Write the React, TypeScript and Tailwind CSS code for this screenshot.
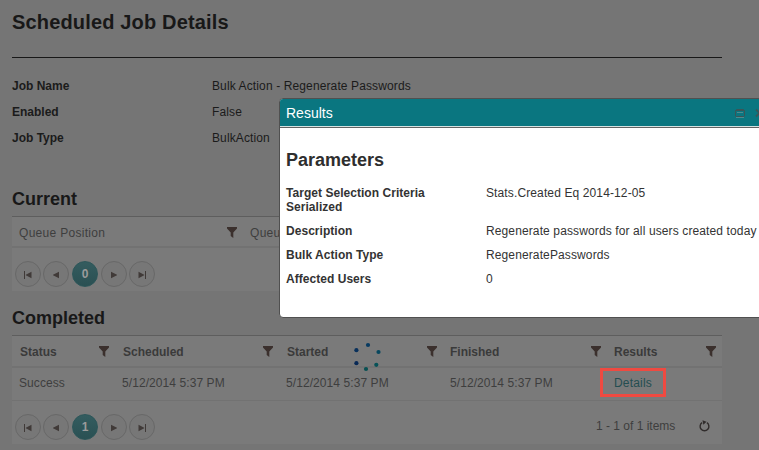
import React from "react";

function Filter() {
  return (
    <svg width="10" height="12" viewBox="0 0 10 12" className="shrink-0" fill="#3b302d">
      <path d="M0 0H10V1.5L6.3 5.5V11L3.7 9V5.5L0 1.5Z" />
    </svg>
  );
}

type ArrowKind = "first" | "prev" | "next" | "last";

function Arrow({ kind }: { kind: ArrowKind }) {
  const flip = kind === "next" || kind === "last";
  const bar = kind === "first" || kind === "last";
  return (
    <svg width="8" height="8" viewBox="0 0 8 8" fill="#403a38" className={flip ? "-scale-x-100" : ""}>
      {bar && <path d="M0 0H1V8H0Z" />}
      <path d={bar ? "M7.5 0.8V7.2L1.8 4.3V3.7Z" : "M7 0.8V7.2L1 4.3V3.7Z"} />
    </svg>
  );
}

function Round({ kind }: { kind: ArrowKind }) {
  return (
    <span className="flex h-[26px] w-[26px] items-center justify-center rounded-full border border-[#686868] bg-[#777777] pt-0.5">
      <Arrow kind={kind} />
    </span>
  );
}

function Pager({ page }: { page: string }) {
  return (
    <div className="flex items-center">
      <Round kind="first" />
      <span className="w-0.5" />
      <Round kind="prev" />
      <span className="mr-[3px] ml-[3px] flex h-[26px] w-[26px] items-center justify-center rounded-full border border-[#2c5659] bg-linear-to-b from-[#345c5f] to-[#2a5053] text-[12px] font-bold text-[#9b9b9b]">
        {page}
      </span>
      <Round kind="next" />
      <span className="w-0.5" />
      <Round kind="last" />
    </div>
  );
}

function JobRow({ label, value }: { label: string; value: string }) {
  return (
    <div className="flex h-[26px] items-center whitespace-nowrap">
      <span className="w-[200px] font-bold tracking-normal">{label}</span>
      <span>{value}</span>
    </div>
  );
}

function HeadCell({ label, className }: { label: string; className: string }) {
  return (
    <div className={"flex items-center justify-between " + className}>
      <span>{label}</span>
      <Filter />
    </div>
  );
}

function ParamRow({ label, value }: { label: string; value: string }) {
  return (
    <div className="mb-[10px] flex leading-[14px]">
      <span className="w-[200px] pr-10 font-bold tracking-[0.04px]">{label}</span>
      <span className="whitespace-nowrap">{value}</span>
    </div>
  );
}

function Spinner() {
  return (
    <svg width="30" height="30" viewBox="0 0 30 30" className="absolute top-[342px] left-[353px]">
      <circle cx="15" cy="3" r="2.1" fill="#073a61" />
      <circle cx="25.5" cy="10" r="2.1" fill="#07475e" />
      <circle cx="23.3" cy="22.8" r="2.1" fill="#075258" />
      <circle cx="13" cy="27" r="2.1" fill="#075052" />
      <circle cx="3.4" cy="21.2" r="2.1" fill="#082956" />
      <circle cx="3.4" cy="8.2" r="2.1" fill="#08305b" />
    </svg>
  );
}

function ResultsWindow() {
  return (
    <section className="absolute top-[98px] left-[279px] h-[220px] w-[500px] overflow-hidden rounded-[4px] border border-[#505050] bg-white">
      <header className="flex h-[27px] items-center bg-[#0a7680] pl-[6px] text-[14px] text-white">
        <span className="w-[449px] shrink-0 pt-0.5">Results</span>
        <svg width="30" height="12" viewBox="0 0 30 12" fill="none" className="mt-0.5 shrink-0">
          <path d="M0.5 8V2.5L1.5 1.5H8.5L9.5 2.5V8L8.5 8.5H1.5Z" stroke="#3b5557" />
          <path d="M1 2.5H9" stroke="#3b5557" />
          <path d="M2 4.5H8M1 9.5H9" stroke="#619093" strokeWidth="0.8" />
          <path d="M21 1.5L28 8.5M28 1.5L21 8.5" stroke="#3b5557" strokeWidth="1.8" />
        </svg>
      </header>
      <div className="h-px bg-[#d6e2e2]" />
      <div className="h-px bg-[#626262]" />
      <div className="pl-[6px] text-[12px] tracking-[0.12px] text-[#333]">
        <h2 className="pt-[21px] text-[18px] leading-[22px] font-bold tracking-normal text-[#2e2e2e]">Parameters</h2>
        <div className="pt-[15px]">
          <ParamRow label="Target Selection Criteria Serialized" value="Stats.Created Eq 2014-12-05" />
          <ParamRow label="Description" value="Regenerate passwords for all users created today" />
          <ParamRow label="Bulk Action Type" value="RegeneratePasswords" />
          <ParamRow label="Affected Users" value="0" />
        </div>
      </div>
    </section>
  );
}

export default function App() {
  return (
    <main className="relative h-[450px] w-[759px] overflow-hidden bg-[#757575] pl-[12px] font-['Liberation_Sans',Arial,sans-serif] text-[12px] text-[#1b1b1b]">
      <div className="w-[710px]">
        <h1 className="h-[57px] pt-[9px] text-[20px] leading-[26px] font-bold tracking-[0.16px] text-[#181818]">
          Scheduled Job Details
        </h1>
        <div className="h-px bg-[#181818]" />
        <div className="h-[131px] pt-[15px] tracking-[0.12px]">
          <JobRow label="Job Name" value="Bulk Action - Regenerate Passwords" />
          <JobRow label="Enabled" value="False" />
          <JobRow label="Job Type" value="BulkAction" />
        </div>

        <h2 className="h-[27px] text-[18px] leading-[21px] font-bold text-[#181818]">Current</h2>
        <section className="h-[75px] border-t border-[#5e5e5e] bg-[#7a7a7a] text-[#3e3e3e]">
          <div className="flex h-[31px] items-center border-b-2 border-[#727272] pt-[3px] tracking-[0.3px]">
            <HeadCell label="Queue Position" className="w-[225px] pl-[7px]" />
            <span className="pl-[13px]">Queue</span>
          </div>
          <div className="pt-[13px] pl-[3px]">
            <Pager page="0" />
          </div>
        </section>

        <h2 className="mt-[17px] h-[27px] text-[18px] leading-[21px] font-bold text-[#181818]">Completed</h2>
        <section className="h-[109px] border-t border-[#5e5e5e] bg-[#7a7a7a] text-[#3e3e3e]">
          <div className="flex h-[32px] items-center border-b-2 border-[#727272] pt-px font-bold text-[#3a3a3a]">
            <HeadCell label="Status" className="w-[97px] pl-[8px]" />
            <HeadCell label="Scheduled" className="w-[164px] pl-[14px]" />
            <HeadCell label="Started" className="w-[164px] pl-[14px]" />
            <HeadCell label="Finished" className="w-[164px] pl-[13px]" />
            <HeadCell label="Results" className="w-[115px] pl-[13px]" />
          </div>
          <div className="flex h-[33px] items-center border-b border-[#727272] pb-0.5 tracking-[0.08px]">
            <span className="w-[103px] pl-[7px]">Success</span>
            <span className="w-[164px] pl-[7px]">5/12/2014 5:37 PM</span>
            <span className="w-[164px] pl-[7px]">5/12/2014 5:37 PM</span>
            <span className="w-[157px] pl-[7px]">5/12/2014 5:37 PM</span>
            <span className="-mt-px flex h-[29px] w-[66px] items-center justify-center border-[3px] border-[#ef4a41] pt-px tracking-[0.2px] text-[#244e51]">
              Details
            </span>
          </div>
          <div className="flex items-center pt-[13px] pl-[3px]">
            <Pager page="1" />
            <span className="ml-[441px] w-[103px] -translate-y-px whitespace-nowrap">1 - 1 of 1 items</span>
            <svg width="11" height="12" viewBox="0 0 11 12" fill="none" className="-translate-y-px">
              <path d="M7.9 2.7A4.4 4.4 0 1 1 3.1 2.7" stroke="#302c2b" strokeWidth="1.4" />
              <path d="M3.5 0.2L7.5 1.7L4.3 4.7Z" fill="#302c2b" />
            </svg>
          </div>
        </section>
      </div>
      <Spinner />
      <ResultsWindow />
    </main>
  );
}
